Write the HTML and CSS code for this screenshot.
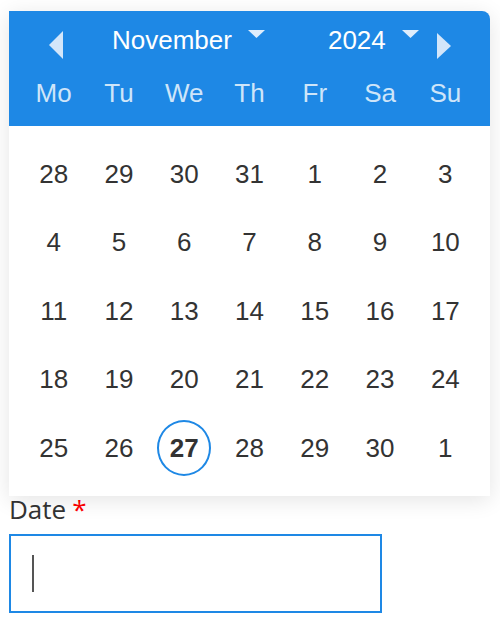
FILE: index.html
```html
<!DOCTYPE html>
<html lang="en">
<head>
<meta charset="utf-8">
<title>Date picker</title>
<link rel="stylesheet" href="styles.css">
</head>
<body>
<div class="page">
  <div class="calendar">
    <div class="cal-header">
      <div class="title-row">
        <span class="nav prev"><svg width="14" height="28" viewBox="0 0 14 28"><polygon points="14,0 0,14 14,28"/></svg></span>
        <span class="select month"><span class="select-text">November</span><svg class="caret" width="17" height="8" viewBox="0 0 17 8"><polygon points="0,0 17,0 8.5,8"/></svg></span>
        <span class="select year"><span class="select-text">2024</span><svg class="caret" width="17" height="8" viewBox="0 0 17 8"><polygon points="0,0 17,0 8.5,8"/></svg></span>
        <span class="nav next"><svg width="14" height="26" viewBox="0 0 14 26"><polygon points="0,0 14,13 0,26"/></svg></span>
      </div>
      <div class="weekdays">
        <span>Mo</span><span>Tu</span><span>We</span><span>Th</span><span>Fr</span><span>Sa</span><span>Su</span>
      </div>
    </div>
    <div class="days">
      <span class="day">28</span><span class="day">29</span><span class="day">30</span><span class="day">31</span><span class="day">1</span><span class="day">2</span><span class="day">3</span>
      <span class="day">4</span><span class="day">5</span><span class="day">6</span><span class="day">7</span><span class="day">8</span><span class="day">9</span><span class="day">10</span>
      <span class="day">11</span><span class="day">12</span><span class="day">13</span><span class="day">14</span><span class="day">15</span><span class="day">16</span><span class="day">17</span>
      <span class="day">18</span><span class="day">19</span><span class="day">20</span><span class="day">21</span><span class="day">22</span><span class="day">23</span><span class="day">24</span>
      <span class="day">25</span><span class="day">26</span><span class="day selected"><span class="ring">27</span></span><span class="day">28</span><span class="day">29</span><span class="day">30</span><span class="day">1</span>
    </div>
  </div>
  <label class="field-label">Date<span class="required">*</span></label>
  <div class="input"><span class="cursor"></span></div>
</div>
</body>
</html>
```

FILE: styles.css
```css
html, body {
  margin: 0;
  padding: 0;
  background: #ffffff;
}

.page {
  padding: 11px 0 0 9px;
  font-family: "Liberation Sans", Arial, sans-serif;
}

.calendar {
  position: relative;
  width: 481px;
  background: #ffffff;
  border-top-right-radius: 8px;
  box-shadow: 0 4px 22px rgba(0, 0, 0, 0.11);
  overflow: hidden;
}

.cal-header {
  background: #1e88e5;
  height: 115px;
}

.title-row {
  display: flex;
  align-items: flex-start;
  height: 58px;
  padding-left: 40px;
}

.nav svg {
  display: block;
  fill: #d3e6fa;
}

.nav.prev {
  margin-top: 20px;
}

.nav.next {
  margin-top: 22px;
  margin-left: 18px;
}

.select {
  display: flex;
  align-items: flex-start;
  color: #ffffff;
  font-size: 26px;
  line-height: 58px;
}

.select.month {
  margin-left: 49px;
}

.select.year {
  margin-left: 63px;
}

.caret {
  display: block;
  fill: #deedfc;
  margin-top: 19px;
  margin-left: 16px;
}

.weekdays {
  display: grid;
  grid-template-columns: repeat(7, 1fr);
  padding: 0 12px;
  line-height: 48px;
  font-size: 26px;
  color: #cee5f9;
  text-align: center;
}

.days {
  display: grid;
  grid-template-columns: repeat(7, 1fr);
  grid-auto-rows: 68.5px;
  padding: 14px 12px 13.5px;
  font-size: 26px;
  color: #333333;
}

.day {
  display: flex;
  align-items: center;
  justify-content: center;
}

.ring {
  display: flex;
  align-items: center;
  justify-content: center;
  width: 50px;
  height: 52px;
  border: 2px solid #1e88e5;
  border-radius: 50%;
  font-weight: bold;
}

.field-label {
  display: block;
  margin-top: -2px;
  font-family: "Open Sans", "Noto Sans", sans-serif;
  font-size: 26px;
  line-height: 30px;
  color: #333333;
}

.required {
  color: #ff0000;
  margin-left: 6px;
}

.input {
  box-sizing: border-box;
  width: 373px;
  height: 79px;
  margin-top: 10px;
  border: 2px solid #1e88e5;
  padding: 19px 0 0 21px;
}

.cursor {
  display: block;
  width: 2px;
  height: 37px;
  background: #555555;
}
```
